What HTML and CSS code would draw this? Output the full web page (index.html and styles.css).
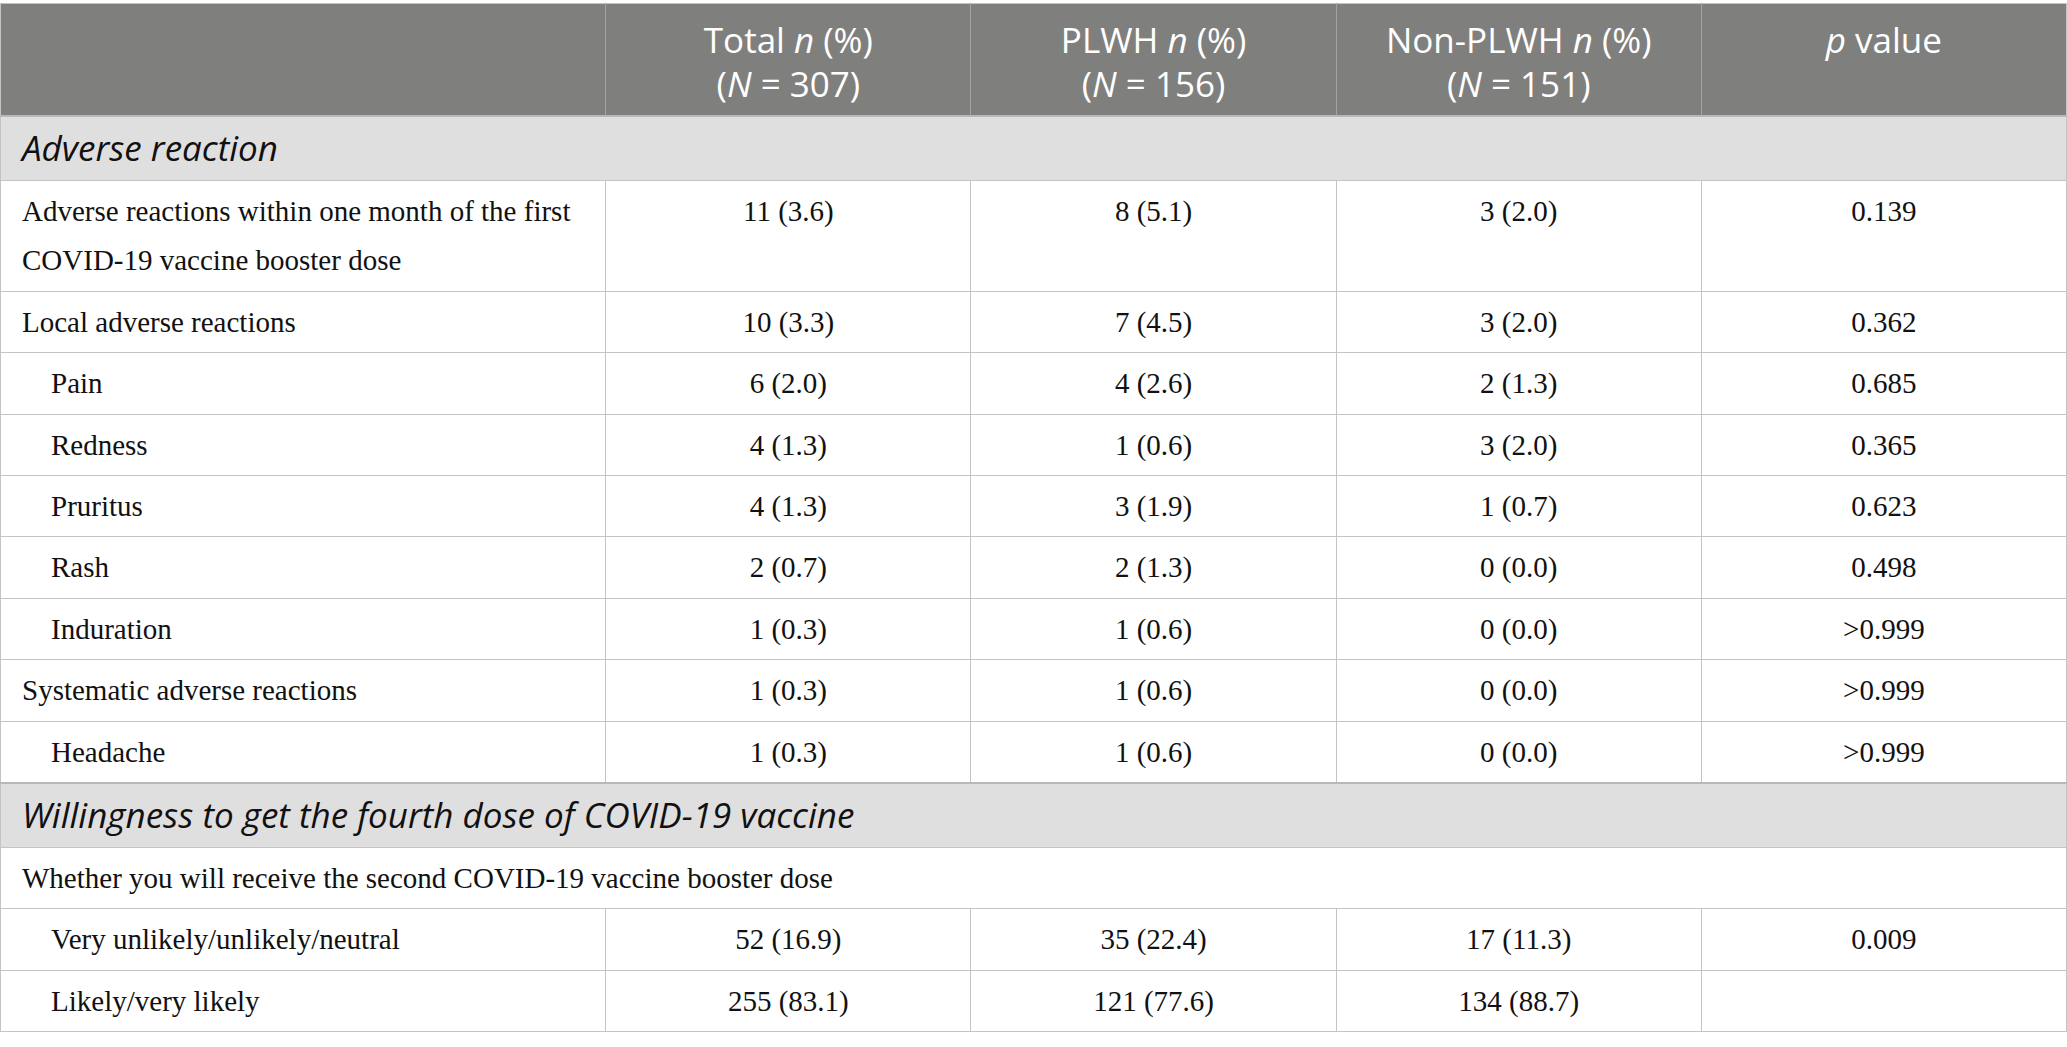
FILE: index.html
```html
<html lang="en">
  <head>
    <title>Adverse reactions and willingness</title>
    <meta charset="utf-8">
    <link rel="stylesheet" href="styles.css">
  </head>
  <body>
    <table class="tableau">
      <colgroup>
        <col class="col-libelle">
        <col class="col-valeur">
        <col class="col-valeur">
        <col class="col-valeur">
        <col class="col-valeur">
      </colgroup>
      <thead>
        <tr>
          <th></th>
          <th>Total <i>n</i> (%)<br>(<i>N</i> = 307)</th>
          <th>PLWH <i>n</i> (%)<br>(<i>N</i> = 156)</th>
          <th>Non-PLWH <i>n</i> (%)<br>(<i>N</i> = 151)</th>
          <th><i>p</i> value</th>
        </tr>
      </thead>
      <tbody>
        <tr class="section"><td colspan="5">Adverse reaction</td></tr>
        <tr>
          <td>Adverse reactions within one month of the first COVID-19 vaccine booster dose</td>
          <td>11 (3.6)</td><td>8 (5.1)</td><td>3 (2.0)</td><td>0.139</td>
        </tr>
        <tr>
          <td>Local adverse reactions</td>
          <td>10 (3.3)</td><td>7 (4.5)</td><td>3 (2.0)</td><td>0.362</td>
        </tr>
        <tr class="retrait">
          <td>Pain</td>
          <td>6 (2.0)</td><td>4 (2.6)</td><td>2 (1.3)</td><td>0.685</td>
        </tr>
        <tr class="retrait">
          <td>Redness</td>
          <td>4 (1.3)</td><td>1 (0.6)</td><td>3 (2.0)</td><td>0.365</td>
        </tr>
        <tr class="retrait">
          <td>Pruritus</td>
          <td>4 (1.3)</td><td>3 (1.9)</td><td>1 (0.7)</td><td>0.623</td>
        </tr>
        <tr class="retrait">
          <td>Rash</td>
          <td>2 (0.7)</td><td>2 (1.3)</td><td>0 (0.0)</td><td>0.498</td>
        </tr>
        <tr class="retrait">
          <td>Induration</td>
          <td>1 (0.3)</td><td>1 (0.6)</td><td>0 (0.0)</td><td>&gt;0.999</td>
        </tr>
        <tr>
          <td>Systematic adverse reactions</td>
          <td>1 (0.3)</td><td>1 (0.6)</td><td>0 (0.0)</td><td>&gt;0.999</td>
        </tr>
        <tr class="retrait">
          <td>Headache</td>
          <td>1 (0.3)</td><td>1 (0.6)</td><td>0 (0.0)</td><td>&gt;0.999</td>
        </tr>
        <tr class="section"><td colspan="5">Willingness to get the fourth dose of COVID-19 vaccine</td></tr>
        <tr class="question"><td colspan="5">Whether you will receive the second COVID-19 vaccine booster dose</td></tr>
        <tr class="retrait">
          <td>Very unlikely/unlikely/neutral</td>
          <td>52 (16.9)</td><td>35 (22.4)</td><td>17 (11.3)</td><td>0.009</td>
        </tr>
        <tr class="retrait">
          <td>Likely/very likely</td>
          <td>255 (83.1)</td><td>121 (77.6)</td><td>134 (88.7)</td><td></td>
        </tr>
      </tbody>
    </table>
  </body>
</html>
```

FILE: styles.css
```css
body {
	margin: 0;
	padding-top: 3px;
	background: white;
}
.tableau {
	width: 2067px;
	border-collapse: collapse;
	table-layout: fixed;
	border: 1px solid #c4c4c4;
	font-family: "Liberation Serif", "Times New Roman", serif;
	font-size: 29px;
	color: #111;
}
.col-libelle { width: 605px; }
.col-valeur { width: 365px; }
.tableau th {
	background-color: #7f807e;
	color: white;
	font-family: "Open Sans", sans-serif;
	font-weight: normal;
	font-size: 35px;
	line-height: 44px;
	padding: 14px 10px 9px;
	vertical-align: top;
	text-align: center;
	border-left: 1px solid #a3a3a3;
}
.tableau th:first-child { border-left: none; }
.tableau td {
	line-height: 49.4px;
	padding: 6px 21px 5px;
	vertical-align: top;
	text-align: center;
	border: 1px solid #c4c4c4;
	border-width: 1px 1px 0 1px;
}
.tableau td:first-child { text-align: left; }
.retrait td:first-child { padding-left: 50px; }
.section td {
	background-color: #e0dfe0;
	font-family: "Open Sans", sans-serif;
	font-style: italic;
	font-size: 35px;
	line-height: 46px;
	padding: 8px 21px 9px;
	border-top: 2px solid #b8b8b8;
}
.question td { text-align: left; }
```
